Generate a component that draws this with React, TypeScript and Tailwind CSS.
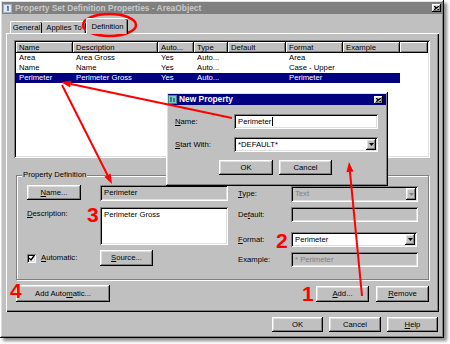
import React from "react";

const raised =
  "shadow-[inset_-1px_-1px_#000,inset_1px_1px_#fff,inset_-2px_-2px_#808080,inset_2px_2px_#dfdfdf]";
const sunken =
  "shadow-[inset_1px_1px_#808080,inset_-1px_-1px_#fff,inset_2px_2px_#000,inset_-2px_-2px_#dfdfdf]";

function Button({ className = "", children }: { className?: string; children: React.ReactNode }) {
  return (
    <div className={`flex shrink-0 items-center justify-center bg-[#c0c0c0] text-black ${raised} ${className}`}>
      {children}
    </div>
  );
}

function Field({
  className = "",
  disabled = false,
  children,
}: {
  className?: string;
  disabled?: boolean;
  children?: React.ReactNode;
}) {
  return (
    <div
      className={`flex shrink-0 items-center px-[4px] ${sunken} ${
        disabled ? "bg-[#c0c0c0] text-[#808080]" : "bg-white text-black"
      } ${className}`}
    >
      {children}
    </div>
  );
}

function Select({ className = "", value, disabled = false }: { className?: string; value: string; disabled?: boolean }) {
  return (
    <div className={`flex shrink-0 items-stretch p-[2px] ${sunken} ${disabled ? "bg-[#c0c0c0]" : "bg-white"} ${className}`}>
      <span className={`flex flex-1 items-center pl-[2px] ${disabled ? "text-[#808080]" : "text-black"}`}>{value}</span>
      <div className={`flex w-[10px] items-center justify-center bg-[#c0c0c0] ${raised}`}>
        <svg width="5" height="3" viewBox="0 0 5 3">
          <path d="M0 0h5L2.5 3z" fill={disabled ? "#808080" : "#000"} />
        </svg>
      </div>
    </div>
  );
}

function CloseBox({ className = "" }: { className?: string }) {
  return (
    <div className={`flex h-[8px] w-[9px] items-center justify-center bg-[#c0c0c0] ${raised} ${className}`}>
      <svg width="5" height="4" viewBox="0 0 5 4">
        <path d="M0 0l5 4M5 0L0 4" stroke="#000" strokeWidth="1.2" />
      </svg>
    </div>
  );
}

function Arrow({ x1, y1, x2, y2 }: { x1: number; y1: number; x2: number; y2: number }) {
  const a = Math.atan2(y2 - y1, x2 - x1);
  const len = 10;
  const half = 3.5;
  const bx = x2 - len * Math.cos(a);
  const by = y2 - len * Math.sin(a);
  const px = -Math.sin(a) * half;
  const py = Math.cos(a) * half;
  return (
    <g>
      <line x1={x1} y1={y1} x2={bx} y2={by} stroke="#ff0000" strokeWidth="2" />
      <polygon points={`${x2},${y2} ${bx + px},${by + py} ${bx - px},${by - py}`} fill="#ff0000" />
    </g>
  );
}

const rows = [
  ["Area", "Area Gross", "Yes", "Auto...", "", "Area", ""],
  ["Name", "Name", "Yes", "Auto...", "", "Case - Upper", ""],
  ["Perimeter", "Perimeter Gross", "Yes", "Auto...", "", "Perimeter", ""],
];

const headers = ["Name", "Description", "Auto...", "Type", "Default", "Format", "Example", ""];

export default function App() {
  return (
    <div className="relative h-[344px] w-[450px] overflow-hidden bg-white font-['Liberation_Sans',Arial,sans-serif] text-[7.7px] leading-none text-black">
      <div className="h-[338px] w-[444px] shadow-[3px_3px_3px_rgba(0,0,0,0.45)]">
        <div className={`flex h-full w-full flex-col bg-[#c0c0c0] p-[2px] ${raised}`}>
          {/* title bar */}
          <div className="flex h-[12px] shrink-0 items-center bg-[#808080] pl-[1px] pr-[1px]">
            <svg width="9" height="9" viewBox="0 0 9 9" className="shrink-0">
              <rect x="0" y="0" width="9" height="9" fill="#9fb3c8" />
              <rect x="1" y="1" width="7" height="7" fill="#dfe8f0" />
              <path d="M5 2v5M4 3h1" stroke="#2a4a7a" strokeWidth="1.2" />
            </svg>
            <span className="ml-[3px] text-[8.4px] font-bold text-[#c8c8c8]">
              Property Set Definition Properties - AreaObject
            </span>
            <CloseBox className="ml-auto" />
          </div>

          {/* tabs */}
          <div className="mt-[4px] flex h-[15px] shrink-0 items-end pl-[8px]">
            <div className="flex h-[12px] w-[32px] items-center justify-center rounded-t-[2px] border-l border-t border-white shadow-[inset_-1px_0_#000]">
              General
            </div>
            <div className="flex h-[12px] w-[44px] items-center justify-center rounded-t-[2px] border-t border-white shadow-[inset_-1px_0_#000,inset_-2px_0_#808080]">
              Applies To
            </div>
            <div className="relative z-10 -mb-px flex h-[16px] w-[42px] items-center justify-center rounded-t-[2px] border-l border-t border-white bg-[#c0c0c0] shadow-[inset_-1px_0_#000,inset_-2px_0_#808080]">
              Definition
            </div>
          </div>

          {/* panel */}
          <div className="ml-[4px] flex h-[279px] w-[433px] shrink-0 flex-col border-l border-t border-white pl-[7px] pt-[6px] shadow-[inset_-1px_-1px_#000,inset_-2px_-2px_#808080]">
            {/* list view */}
            <div className={`h-[118px] w-[416px] shrink-0 bg-white p-[2px] ${sunken}`}>
              <div className="flex h-[11px]">
                {headers.map((h, i) => (
                  <div
                    key={i}
                    className={`flex h-full items-center pl-[3px] bg-[#c0c0c0] shadow-[inset_-1px_-1px_#000,inset_1px_1px_#fff,inset_-2px_-2px_#808080] ${
                      ["w-[57px]", "w-[85px]", "w-[36px]", "w-[34px]", "w-[58px]", "w-[57px]", "w-[57px]", "w-[28px]"][i]
                    }`}
                  >
                    {h}
                  </div>
                ))}
              </div>
              {rows.map((r, ri) => (
                <div
                  key={ri}
                  className={`grid h-[10px] w-[384px] grid-cols-[57px_85px_36px_34px_58px_57px_57px] items-center ${
                    ri === 2 ? "bg-[#000080] text-white" : "text-black"
                  }`}
                >
                  {r.map((c, ci) => (
                    <span key={ci} className="pl-[3px]">
                      {c}
                    </span>
                  ))}
                </div>
              ))}
            </div>

            {/* group box */}
            <div className="relative ml-[2px] mt-[17px] h-[105px] w-[413px] shrink-0 border border-[#808080] pl-[10px] pt-[9px] shadow-[1px_1px_0_#fff,inset_1px_1px_0_#fff]">
              <span className="absolute left-[5px] top-[-5px] bg-[#c0c0c0] px-[1px]">Property Definition</span>
              <div className="flex">
                {/* left column */}
                <div className="flex w-[201px] flex-col">
                  <div className="flex h-[16px] items-start">
                    <Button className="h-[15px] w-[54px]">
                      <u>N</u>ame...
                    </Button>
                    <Field className="ml-[19px] h-[16px] w-[128px]" disabled>
                      <span className="text-black">Perimeter</span>
                    </Field>
                  </div>
                  <div className="mt-[6px] flex">
                    <span className="w-[73px] pt-[3px]">
                      <u>D</u>escription:
                    </span>
                    <Field className="h-[38px] w-[128px] items-start pt-[4px]">Perimeter Gross</Field>
                  </div>
                  <div className="mt-[5px] flex items-center">
                    <div className="flex w-[73px] items-center">
                      <div className={`flex h-[9px] w-[9px] items-center justify-center bg-white ${sunken}`}>
                        <svg width="7" height="7" viewBox="0 0 7 7">
                          <path d="M1 3l2 2 3-4" stroke="#000" strokeWidth="1.4" fill="none" />
                        </svg>
                      </div>
                      <span className="ml-[5px]">
                        <u>A</u>utomatic:
                      </span>
                    </div>
                    <Button className="h-[16px] w-[53px]">
                      <u>S</u>ource...
                    </Button>
                  </div>
                </div>

                {/* right column */}
                <div className="ml-[10px] flex w-[180px] flex-col">
                  <div className="mt-[1px] flex h-[16px] items-center">
                    <span className="w-[53px]">
                      <u>T</u>ype:
                    </span>
                    <Select className="h-[16px] w-[127px]" value="Text" disabled />
                  </div>
                  <div className="mt-[5px] flex h-[15px] items-center">
                    <span className="w-[53px]">
                      De<u>f</u>ault:
                    </span>
                    <Field className="h-[15px] w-[127px]" disabled />
                  </div>
                  <div className="mt-[10px] flex h-[15px] items-center">
                    <span className="w-[53px]">
                      <u>F</u>ormat:
                    </span>
                    <Select className="h-[15px] w-[126px]" value="Perimeter" />
                  </div>
                  <div className="mt-[5px] flex h-[15px] items-center">
                    <span className="w-[53px]">Example:</span>
                    <Field className="h-[15px] w-[127px]" disabled>
                      * Perimeter
                    </Field>
                  </div>
                </div>
              </div>
            </div>

            {/* buttons under group */}
            <div className="ml-[2px] mt-[5px] flex w-[413px] items-start">
              <Button className="h-[17px] w-[94px]">
                Add Auto<u>m</u>atic...
              </Button>
              <Button className="ml-auto mt-[1px] h-[16px] w-[53px]">
                <u>A</u>dd...
              </Button>
              <Button className="ml-[7px] mt-[1px] h-[16px] w-[53px]">
                <u>R</u>emove
              </Button>
            </div>
          </div>

          {/* dialog buttons */}
          <div className="mt-[5px] flex justify-end gap-[6px] pr-[4px]">
            <Button className="h-[15px] w-[51px]">OK</Button>
            <Button className="h-[15px] w-[52px]">Cancel</Button>
            <Button className="h-[15px] w-[51px]">
              <u>H</u>elp
            </Button>
          </div>
        </div>
      </div>

      {/* New Property dialog */}
      <div className={`absolute left-[166px] top-[92px] flex h-[94px] w-[222px] flex-col bg-[#c0c0c0] p-[2px] ${raised}`}>
        <div className="flex h-[11px] shrink-0 items-center bg-[#000080] pr-[3px]">
          <svg width="9" height="9" viewBox="0 0 9 9" className="shrink-0">
            <rect x="0" y="0" width="9" height="9" fill="#3a8a8a" />
            <rect x="1" y="1" width="7" height="7" fill="#7fc8c8" />
            <path d="M3 2v5M6 3v4" stroke="#1a4a4a" strokeWidth="1.2" />
          </svg>
          <span className="ml-[2px] text-[8.4px] font-bold text-white">New Property</span>
          <CloseBox className="ml-auto" />
        </div>
        <div className="mt-[9px] flex h-[15px] items-center pl-[7px]">
          <span className="w-[59px]">
            <u>N</u>ame:
          </span>
          <Field className="h-[15px] w-[144px]">
            Perimeter
            <span className="ml-px h-[9px] w-px bg-black" />
          </Field>
        </div>
        <div className="mt-[8px] flex h-[15px] items-center pl-[7px]">
          <span className="w-[59px]">
            <u>S</u>tart With:
          </span>
          <Select className="h-[15px] w-[144px]" value="*DEFAULT*" />
        </div>
        <div className="mt-[8px] flex pl-[51px]">
          <Button className="h-[15px] w-[54px]">OK</Button>
          <Button className="ml-[6px] h-[15px] w-[53px]">Cancel</Button>
        </div>
      </div>

      {/* annotations */}
      <svg className="pointer-events-none absolute left-0 top-0" width="450" height="344" viewBox="0 0 450 344">
        <ellipse cx="109.5" cy="25" rx="26.5" ry="11" fill="none" stroke="#ff0000" strokeWidth="2.5" />
        <Arrow x1={232} y1={118} x2={61} y2={82} />
        <Arrow x1={62} y1={85} x2={112} y2={184} />
        <Arrow x1={362} y1={296} x2={349} y2={162} />
      </svg>
      <span className="absolute left-[302px] top-[283px] text-[21px] font-bold text-[#ff0000]">1</span>
      <span className="absolute left-[276px] top-[230px] text-[21px] font-bold text-[#ff0000]">2</span>
      <span className="absolute left-[87px] top-[204px] text-[21px] font-bold text-[#ff0000]">3</span>
      <span className="absolute left-[10px] top-[280px] text-[21px] font-bold text-[#ff0000]">4</span>
    </div>
  );
}
